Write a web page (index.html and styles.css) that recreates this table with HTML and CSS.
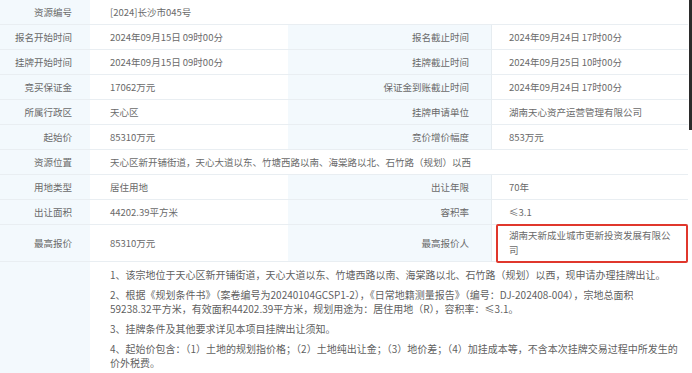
FILE: index.html
```html
<!DOCTYPE html>
<html lang="zh-CN">
<head>
<meta charset="utf-8">
<title>资源详情</title>
<link rel="stylesheet" href="styles.css">
</head>
<body>
<div class="page">
  <div class="grid">
    <div class="lab">资源编号</div>
    <div class="val span3">[2024]长沙市045号</div>

    <div class="lab">报名开始时间</div>
    <div class="val">2024年09月15日 09时00分</div>
    <div class="lab lab2">报名截止时间</div>
    <div class="val val2">2024年09月24日 17时00分</div>

    <div class="lab">挂牌开始时间</div>
    <div class="val">2024年09月15日 09时00分</div>
    <div class="lab lab2">挂牌截止时间</div>
    <div class="val val2">2024年09月25日 10时00分</div>

    <div class="lab">竞买保证金</div>
    <div class="val">17062万元</div>
    <div class="lab lab2">保证金到账截止时间</div>
    <div class="val val2">2024年09月24日 17时00分</div>

    <div class="lab">所属行政区</div>
    <div class="val">天心区</div>
    <div class="lab lab2">挂牌申请单位</div>
    <div class="val val2">湖南天心资产运营管理有限公司</div>

    <div class="lab">起始价</div>
    <div class="val">85310万元</div>
    <div class="lab lab2">竞价增价幅度</div>
    <div class="val val2">853万元</div>

    <div class="lab">资源位置</div>
    <div class="val span3">天心区新开铺街道，天心大道以东、竹塘西路以南、海棠路以北、石竹路（规划）以西</div>

    <div class="lab">用地类型</div>
    <div class="val">居住用地</div>
    <div class="lab lab2">出让年限</div>
    <div class="val val2">70年</div>

    <div class="lab">出让面积</div>
    <div class="val">44202.39平方米</div>
    <div class="lab lab2">容积率</div>
    <div class="val val2">≤3.1</div>

    <div class="lab">最高报价</div>
    <div class="val">85310万元</div>
    <div class="lab lab2">最高报价人</div>
    <div class="val val2 winner">
      <span class="winner-text">湖南天新成业城市更新投资发展有限公<br>司</span>
      <span class="mark"></span>
    </div>

    <div class="lab notes-lab"></div>
    <div class="notes span3">
      <p>1、该宗地位于天心区新开铺街道，天心大道以东、竹塘西路以南、海棠路以北、石竹路（规划）以西，现申请办理挂牌出让。</p>
      <p>2、根据《规划条件书》（案卷编号为20240104GCSP1-2），《日常地籍测量报告》（编号：DJ-202408-004），宗地总面积<br>59238.32平方米，有效面积44202.39平方米，规划用途为：居住用地（R），容积率：≤3.1。</p>
      <p>3、挂牌条件及其他要求详见本项目挂牌出让须知。</p>
      <p>4、起始价包含：（1）土地的规划指价格；（2）土地纯出让金；（3）地价差；（4）加挂成本等，不含本次挂牌交易过程中所发生的<br>价外税费。</p>
    </div>
  </div>
  <div class="edge"></div>
</div>
</body>
</html>
```

FILE: styles.css
```css
html, body {
  margin: 0;
  padding: 0;
  background: #ffffff;
}

body {
  font-family: "Noto Sans CJK SC", "Noto Sans", sans-serif;
  color: #6a6a6a;
  overflow: hidden;
}

.page {
  display: flex;
  width: 692px;
  height: 373px;
  overflow: hidden;
}

.grid {
  display: grid;
  grid-template-columns: 90px 198px 204px 196px;
  grid-template-rows: repeat(9, 25px) 37px 120px;
  width: 688px;
  flex: none;
  align-content: start;
}

.lab,
.val {
  display: flex;
  align-items: center;
  font-size: 9.5px;
  white-space: nowrap;
  border-bottom: 1px solid #e9eef2;
  box-sizing: border-box;
}

.lab {
  background: #f3f9fd;
  justify-content: flex-end;
  padding-right: 18px;
}

.lab2 {
  padding-right: 22px;
  border-right: 1px solid #e6ecf0;
}

.val {
  background: #ffffff;
  padding-left: 20px;
}

.val2 {
  padding-left: 17px;
  padding-right: 4px;
}

.span3 {
  grid-column: span 3;
}

.winner {
  position: relative;
  line-height: 15px;
}

.winner-text {
  display: block;
  margin-top: -1px;
}

.mark {
  position: absolute;
  left: 4px;
  top: -1px;
  width: 192px;
  height: 39px;
  border: 2px solid #e0372c;
  border-radius: 2px;
  box-sizing: border-box;
}

.notes-lab {
  border-bottom: none;
}

.notes {
  padding: 6px 4px 0 20px;
  font-size: 10px;
  line-height: 14px;
  background: #ffffff;
  color: #5f5f5f;
}

.notes p {
  margin: 0 0 6px 0;
  white-space: nowrap;
}

.edge {
  flex: none;
  width: 3px;
  height: 130px;
  margin-left: 1px;
  background: #2b2b2b;
}
```
